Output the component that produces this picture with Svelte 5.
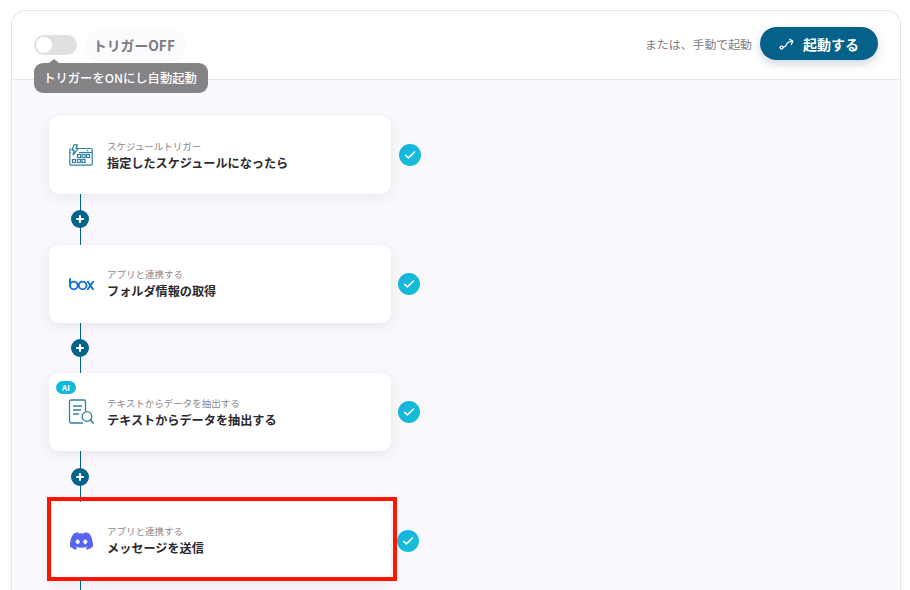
<script lang="ts">
  const steps = [
    { kind: 'schedule', sub: 'スケジュールトリガー', title: '指定したスケジュールになったら', gap: 8 },
    { kind: 'box', sub: 'アプリと連携する', title: 'フォルダ情報の取得', gap: 7 },
    { kind: 'ai', sub: 'テキストからデータを抽出する', title: 'テキストからデータを抽出する', gap: 7 },
    { kind: 'discord', sub: 'アプリと連携する', title: 'メッセージを送信', gap: 6 }
  ];
</script>

<div class="panel">
  <header class="head">
    <div class="trigger">
      <span class="toggle"><span class="knob"></span></span>
      <span class="trigger-label">トリガーOFF</span>
      <div class="tip">トリガーをONにし自動起動</div>
    </div>
    <div class="manual">
      <span class="manual-text">または、手動で起動</span>
      <button class="run">
        <svg width="16" height="12" viewBox="0 0 16 12" fill="none" stroke="#fff" stroke-width="1.3" stroke-linecap="round" stroke-linejoin="round">
          <circle cx="2.6" cy="9.6" r="1.5" />
          <path d="M4.4 9.2c2 0 2.4-1 3-2.6s1-2.6 3-2.8l2.6-.8" />
          <path d="M10.8 1.4l3 1.8-1.4 3" />
        </svg>
        起動する
      </button>
    </div>
  </header>

  <main class="flow">
    {#each steps as step, i}
      <div class="step">
        <div class="card">
          {#if step.kind === 'ai'}<span class="ai">AI</span>{/if}
          <div class="icon">
            {#if step.kind === 'schedule'}
              <svg width="24" height="22" viewBox="0 0 24 22" fill="none" stroke="#31809f" stroke-width="1.200">
                <rect x=".8" y="4.500" width="22.400" height="16.700" rx="1.200" />
                <path d="M1 8.500h22" />
                <path d="M2 .2h8v11H2z" fill="#fff" stroke="none" />
                <path d="M5 .8L3 6.200h2.200L4 10.800 9.400 4.400H6.900L8.400.8z" fill="none" stroke-width="1.300" stroke-linejoin="round" />
                <circle cx="18.500" cy="6.500" r=".7" fill="#31809f" stroke="none" />
                <rect x="8.500" y="10.500" width="3" height="3" />
                <rect x="13" y="10.500" width="3" height="3" />
                <rect x="17.500" y="10.500" width="3" height="3" />
                <rect x="3.500" y="15.500" width="3" height="3" />
                <rect x="8.500" y="15.500" width="3" height="3" />
                <rect x="13" y="15.500" width="3" height="3" />
              </svg>
            {:else if step.kind === 'box'}
              <svg width="25" height="14" viewBox="0 0 26 14" fill="none" stroke="#0f73d6" stroke-width="2">
                <path d="M1 1v8" />
                <circle cx="5" cy="8.500" r="4" />
                <circle cx="14.200" cy="8.500" r="4" />
                <path d="M19.600 4.600l5.400 7.800M25 4.600l-5.400 7.800" stroke-linecap="round" />
              </svg>
            {:else if step.kind === 'ai'}
              <svg width="26" height="26" viewBox="0 0 26 26" fill="none" stroke="#31809f" stroke-width="1.300">
                <path d="M15 24H3a1.500 1.500 0 0 1-1.500-1.500v-20A1.500 1.500 0 0 1 3 1h13a1.500 1.500 0 0 1 1.500 1.500V12" />
                <path d="M5 7h9" stroke-width="1.500" />
                <path d="M5 11h8M5 15h6" />
                <circle cx="19" cy="17.500" r="4.800" fill="#fff" />
                <path d="M22.500 21l2.700 3" stroke-width="1.600" stroke-linecap="round" />
              </svg>
            {:else}
              <svg width="23" height="18" viewBox="0 0 127.140 96.360">
                <path fill="#5865f2" d="M107.700 8.070A105.150 105.150 0 0 0 81.470 0a72.060 72.060 0 0 0-3.360 6.830 97.680 97.680 0 0 0-29.110 0A72.370 72.370 0 0 0 45.640 0a105.890 105.890 0 0 0-26.250 8.090C2.790 32.650-1.710 56.600.54 80.210a105.730 105.730 0 0 0 32.170 16.150 77.700 77.700 0 0 0 6.890-11.110 68.420 68.420 0 0 1-10.850-5.180c.91-.66 1.800-1.340 2.660-2a75.570 75.570 0 0 0 64.320 0c.87.710 1.760 1.390 2.660 2a68.680 68.680 0 0 1-10.870 5.190 77 77 0 0 0 6.890 11.100 105.250 105.250 0 0 0 32.190-16.140c2.640-27.380-4.510-51.110-18.900-72.150zM42.450 65.690C36.180 65.690 31 60 31 53s5-12.740 11.430-12.740S54 46 53.890 53s-5.050 12.690-11.440 12.690zm42.240 0C78.410 65.690 73.250 60 73.250 53s5-12.740 11.440-12.740S96.230 46 96.120 53s-5.040 12.690-11.430 12.690z" />
              </svg>
            {/if}
          </div>
          <div class="copy">
            <div class="sub">{step.sub}</div>
            <div class="title">{step.title}</div>
          </div>
          {#if step.kind === 'discord'}<div class="highlight"></div>{/if}
        </div>
        <span class="check" style="margin-left: {step.gap}px">
          <svg width="12" height="10" viewBox="0 0 14 11" fill="none" stroke="#fff" stroke-width="1.800" stroke-linecap="round" stroke-linejoin="round">
            <path d="M1.800 5.800l3.400 3L12.200 2" />
          </svg>
        </span>
      </div>
      <div class="link">
        {#if i < steps.length - 1}
          <span class="plus">
            <svg width="8" height="8" viewBox="0 0 8 8" stroke="#fff" stroke-width="2" stroke-linecap="round">
              <path d="M4 1v6M1 4h6" />
            </svg>
          </span>
        {/if}
      </div>
    {/each}
  </main>
</div>

<style>
  :global(body) {
    background: #fff;
    overflow: hidden;
  }

  .panel {
    margin: 10px 9px 0 11px;
    height: 640px;
    border: 1px solid #e6e6ea;
    border-radius: 14px;
    box-sizing: border-box;
    background: #faf8fc;
    font-family: "Noto Sans CJK JP", "Noto Sans", sans-serif;
  }

  .head {
    display: flex;
    justify-content: space-between;
    align-items: flex-start;
    height: 69px;
    box-sizing: border-box;
    padding: 16px 22px 0 22px;
    background: #fff;
    border-bottom: 1px solid #e6e6ea;
    border-radius: 14px 14px 0 0;
  }

  .trigger {
    position: relative;
    display: flex;
    align-items: center;
    gap: 8px;
  }

  .toggle {
    display: block;
    width: 43px;
    height: 20px;
    border-radius: 10px;
    background: #e0e0e3;
    position: relative;
    margin-top: 1px;
  }

  .knob {
    position: absolute;
    left: 2px;
    top: 2px;
    width: 16px;
    height: 16px;
    border-radius: 50%;
    background: #fff;
  }

  .trigger-label {
    padding: 0 11px 0 8px;
    height: 34px;
    line-height: 34px;
    margin-top: 1px;
    border-radius: 17px;
    background: #fbfafd;
    color: #7e7c82;
    font-size: 13.800px;
    font-weight: 700;
  }

  .tip {
    position: absolute;
    left: 0;
    top: 36px;
    width: 174px;
    height: 30px;
    line-height: 30px;
    box-sizing: border-box;
    padding-right: 2px;
    text-align: center;
    border-radius: 9px;
    background: #858386;
    color: #fff;
    font-size: 12.300px;
    font-weight: 500;
    white-space: nowrap;
    z-index: 2;
  }

  .tip::before {
    content: "";
    position: absolute;
    left: 15px;
    top: -4px;
    border: 5px solid transparent;
    border-top: 0;
    border-bottom: 4px solid #858386;
  }

  .manual {
    display: flex;
    align-items: center;
    gap: 8px;
  }

  .manual-text {
    color: #7e7c82;
    font-size: 11.900px;
  }

  .run {
    display: flex;
    align-items: center;
    justify-content: center;
    gap: 8px;
    width: 118px;
    height: 33px;
    border: 0;
    padding: 0;
    border-radius: 17px;
    background: #04628a;
    color: #fff;
    font-family: inherit;
    font-size: 14px;
    font-weight: 700;
    box-shadow: 0 4px 10px rgba(40, 70, 100, 0.22);
  }

  .flow {
    padding: 36px 0 0 37px;
  }

  .step {
    display: flex;
    align-items: center;
  }

  .card {
    position: relative;
    display: flex;
    align-items: center;
    width: 342px;
    height: 78px;
    box-sizing: border-box;
    border-radius: 10px;
    background: #fff;
    box-shadow: 0 3px 12px rgba(60, 60, 90, 0.09);
  }

  .icon {
    display: flex;
    justify-content: center;
    align-items: center;
    width: 58px;
    box-sizing: border-box;
    padding-left: 6px;
    flex-shrink: 0;
  }

  .sub {
    color: #8a888d;
    font-size: 9.500px;
    line-height: 14px;
  }

  .title {
    margin-top: 1px;
    color: #2b2b2f;
    font-size: 12.150px;
    font-weight: 700;
    line-height: 18px;
  }

  .ai {
    position: absolute;
    left: 7px;
    top: 8px;
    width: 20px;
    height: 13px;
    line-height: 13px;
    text-align: center;
    border-radius: 7px;
    background: #14b8dc;
    color: #fff;
    font-size: 8px;
    font-weight: 700;
  }

  .highlight {
    position: absolute;
    left: -2px;
    top: -5px;
    right: -6px;
    bottom: -1px;
    border: 4px solid #ff1500;
    pointer-events: none;
  }

  .check {
    display: flex;
    align-items: center;
    justify-content: center;
    width: 22px;
    height: 22px;
    border-radius: 50%;
    background: linear-gradient(135deg, #14b0e2, #18c2d2);
  }

  .link {
    position: relative;
    display: flex;
    align-items: center;
    width: 18px;
    height: 50.670px;
    margin-left: 22px;
    justify-content: center;
    background: linear-gradient(#05628a, #05628a) center / 1px 100% no-repeat;
  }

  .plus {
    display: flex;
    align-items: center;
    justify-content: center;
    width: 18px;
    height: 18px;
    border-radius: 50%;
    background: #05628a;
  }
</style>
